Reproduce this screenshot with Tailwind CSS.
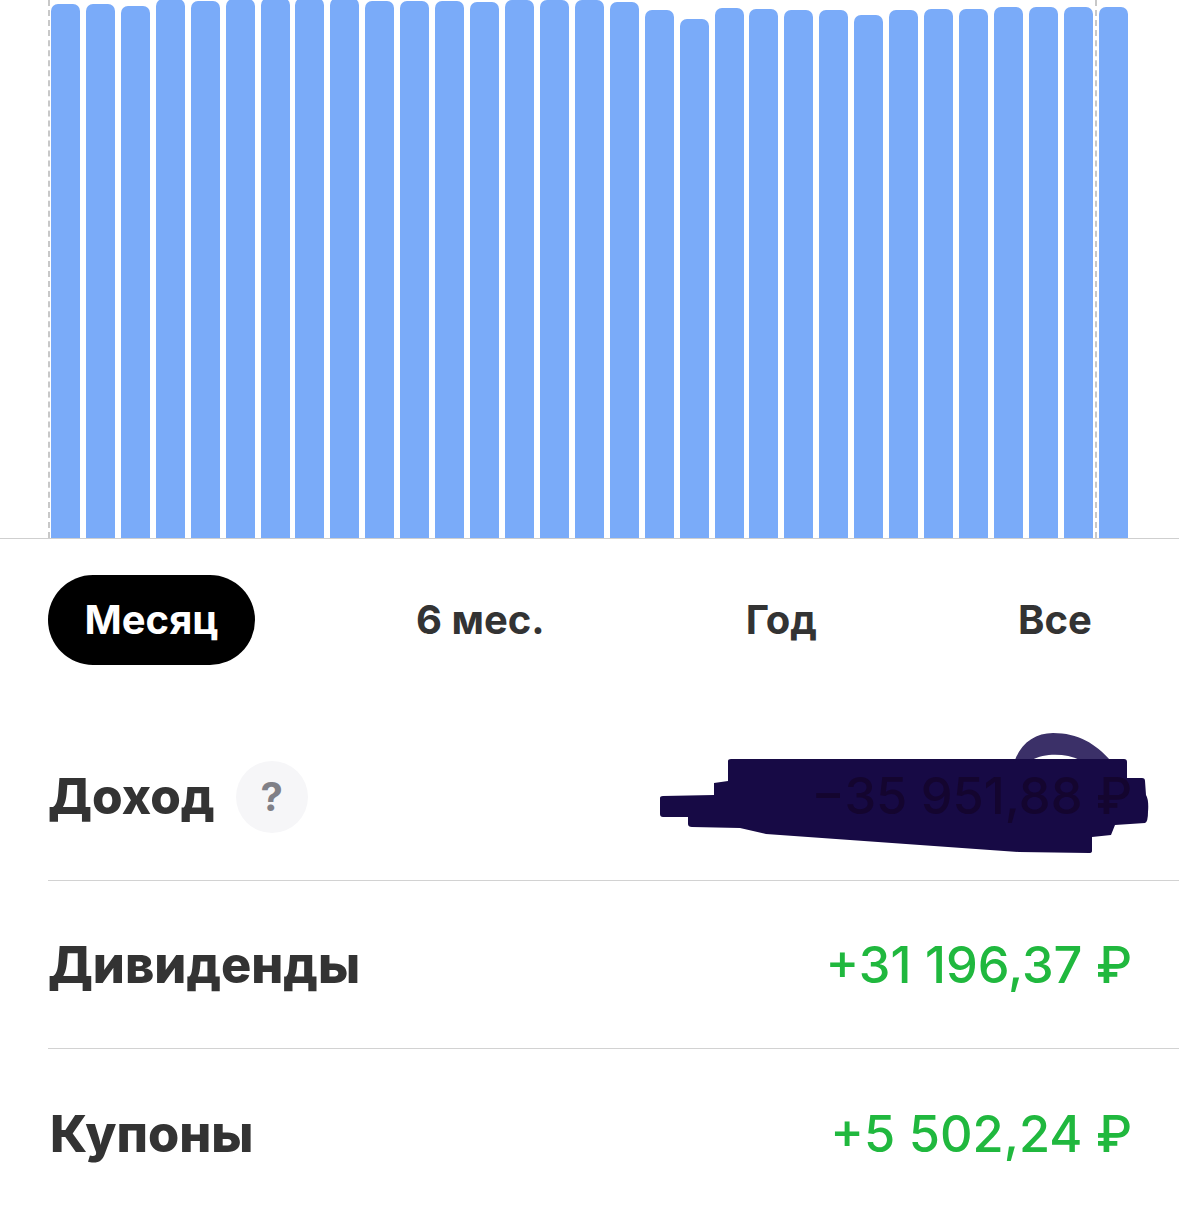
<!DOCTYPE html>
<html lang="ru">
<head>
<meta charset="utf-8">
<script src="https://cdn.jsdelivr.net/npm/@tailwindcss/browser@4"></script>
</head>
<body class="bg-white">
<div class="relative w-[1179px] h-[1215px] overflow-hidden bg-white font-['Inter','Liberation_Sans',Arial,sans-serif] text-[#333333]">
  <svg class="absolute left-0 top-0" width="1179" height="1215" viewBox="0 0 1179 1215" fill="none">
    <path d="M1015 760 C1022 742 1036 733 1053 733 C1078 733 1096 744 1110 760 L1080 760 C1066 753 1044 753 1032 760 Z" fill="#3b3068"/>
    <path d="M728 761 Q728 759 731 759 L1124 759 Q1127 759 1127 762 L1127 778 L1142 778 Q1145 778 1145 781 L1146 795 Q1149 800 1148 812 Q1148 822 1145 823 L1115 825 L1111 835 L1092 837 L1092 851 Q1092 853 1089 853 L1019 852 L766 834 L740 828 L692 827 Q688 827 688 824 L688 817 L663 817 Q660 817 660 814 L660 798 Q660 796 663 796 L714 795 L714 783 L728 781 Z" fill="#170a45"/>
  </svg>

  <div class="relative flex h-[539px] items-end justify-between border-b border-[#cfcfcf] pl-[51px] pr-[51px]">
    <div class="w-[29px] h-[534px] rounded-t-[7px] bg-[#7aabf9]"></div>
    <div class="w-[29px] h-[534px] rounded-t-[7px] bg-[#7aabf9]"></div>
    <div class="w-[29px] h-[532px] rounded-t-[7px] bg-[#7aabf9]"></div>
    <div class="w-[29px] h-[539px] rounded-t-[7px] bg-[#7aabf9]"></div>
    <div class="w-[29px] h-[537px] rounded-t-[7px] bg-[#7aabf9]"></div>
    <div class="w-[29px] h-[539px] rounded-t-[7px] bg-[#7aabf9]"></div>
    <div class="w-[29px] h-[540px] rounded-t-[7px] bg-[#7aabf9]"></div>
    <div class="w-[29px] h-[540px] rounded-t-[7px] bg-[#7aabf9]"></div>
    <div class="w-[29px] h-[540px] rounded-t-[7px] bg-[#7aabf9]"></div>
    <div class="w-[29px] h-[537px] rounded-t-[7px] bg-[#7aabf9]"></div>
    <div class="w-[29px] h-[537px] rounded-t-[7px] bg-[#7aabf9]"></div>
    <div class="w-[29px] h-[537px] rounded-t-[7px] bg-[#7aabf9]"></div>
    <div class="w-[29px] h-[536px] rounded-t-[7px] bg-[#7aabf9]"></div>
    <div class="w-[29px] h-[538px] rounded-t-[7px] bg-[#7aabf9]"></div>
    <div class="w-[29px] h-[538px] rounded-t-[7px] bg-[#7aabf9]"></div>
    <div class="w-[29px] h-[538px] rounded-t-[7px] bg-[#7aabf9]"></div>
    <div class="w-[29px] h-[536px] rounded-t-[7px] bg-[#7aabf9]"></div>
    <div class="w-[29px] h-[528px] rounded-t-[7px] bg-[#7aabf9]"></div>
    <div class="w-[29px] h-[519px] rounded-t-[7px] bg-[#7aabf9]"></div>
    <div class="w-[29px] h-[530px] rounded-t-[7px] bg-[#7aabf9]"></div>
    <div class="w-[29px] h-[529px] rounded-t-[7px] bg-[#7aabf9]"></div>
    <div class="w-[29px] h-[528px] rounded-t-[7px] bg-[#7aabf9]"></div>
    <div class="w-[29px] h-[528px] rounded-t-[7px] bg-[#7aabf9]"></div>
    <div class="w-[29px] h-[523px] rounded-t-[7px] bg-[#7aabf9]"></div>
    <div class="w-[29px] h-[528px] rounded-t-[7px] bg-[#7aabf9]"></div>
    <div class="w-[29px] h-[529px] rounded-t-[7px] bg-[#7aabf9]"></div>
    <div class="w-[29px] h-[529px] rounded-t-[7px] bg-[#7aabf9]"></div>
    <div class="w-[29px] h-[531px] rounded-t-[7px] bg-[#7aabf9]"></div>
    <div class="w-[29px] h-[531px] rounded-t-[7px] bg-[#7aabf9]"></div>
    <div class="w-[29px] h-[531px] rounded-t-[7px] bg-[#7aabf9]"></div>
    <div class="w-[29px] h-[531px] rounded-t-[7px] bg-[#7aabf9]"></div>
    <div class="absolute left-[48px] top-0 h-[538px] border-l-2 border-dashed border-[#c8c8c8]"></div>
    <div class="absolute left-[1094px] top-0 h-[538px] w-[5px] bg-white"></div>
    <div class="absolute left-[1095px] top-0 h-[538px] border-l-2 border-dashed border-[#c8c8c8]"></div>
  </div>

  <div class="relative mt-[36px] flex h-[90px] items-center gap-[124px] pl-[48px] text-[40px] font-bold leading-none">
    <div class="flex h-[90px] items-center rounded-full bg-black px-[36.5px] text-white">Месяц</div>
    <div class="px-[37px]">6 мес.</div>
    <div class="ml-[3px] px-[37px]">Год</div>
    <div class="ml-[3px] px-[37px]">Все</div>
  </div>

  <div class="relative mt-[48px] ml-[48px]">
    <div class="flex h-[168px] items-center justify-between border-b border-[#d2d2d2] pr-[47px]">
      <div class="flex items-center gap-[21px]">
        <span class="text-[49.5px] font-extrabold leading-none">Доход</span>
        <span class="flex h-[72px] w-[72px] items-center justify-center rounded-full bg-[#f6f6f8] text-[40px] font-bold leading-none text-[#808087]">?</span>
      </div>
      <span class="text-[50.5px] font-medium leading-none text-[#14052f]">−35 951,88 ₽</span>
    </div>
    <div class="flex h-[168px] items-center justify-between border-b border-[#d2d2d2] pt-[2px] pr-[47px]">
      <span class="text-[50.5px] font-extrabold leading-none">Дивиденды</span>
      <span class="text-[50.5px] font-medium leading-none text-[#20b83e]">+31 196,37 ₽</span>
    </div>
    <div class="flex h-[168px] items-center justify-between pt-[2px] pr-[47px]">
      <span class="ml-[2px] text-[50.5px] font-extrabold leading-none">Купоны</span>
      <span class="text-[50.5px] font-medium leading-none text-[#20b83e]">+5 502,24 ₽</span>
    </div>
  </div>
</div>
</body>
</html>
